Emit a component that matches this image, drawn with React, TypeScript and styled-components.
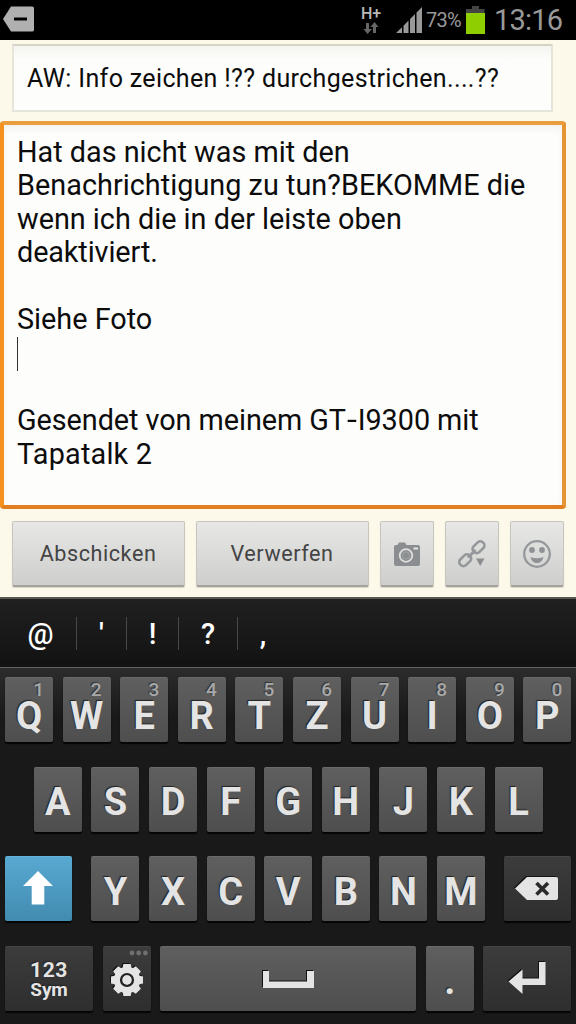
import React from "react";
import styled, { createGlobalStyle, css } from "styled-components";

const GlobalStyle = createGlobalStyle`
  * { box-sizing: border-box; }
  body { margin: 0; background: #000; font-family: Roboto, "Noto Sans", sans-serif; }
`;

const Screen = styled.div`
  width: 576px;
  height: 1024px;
  display: flex;
  flex-direction: column;
  overflow: hidden;
`;

const StatusBar = styled.header`
  height: 40px;
  display: flex;
  align-items: center;
  justify-content: space-between;
  padding: 0 13px 0 2px;
  background: #000;
  color: #999;
`;

const StatusGroup = styled.div`
  display: flex;
  align-items: center;
  height: 40px;
`;

const Percent = styled.span`
  width: 40px;
  margin-left: 3px;
  font-size: 20px;
  line-height: 41px;
  letter-spacing: -0.7px;
`;

const Clock = styled.span`
  width: 69px;
  margin-left: 9px;
  font-size: 29px;
  line-height: 39px;
  letter-spacing: -0.8px;
  color: #999;
`;

const Network = styled.div`
  display: flex;
  flex-direction: column;
  align-items: center;
  width: 22px;
  margin-right: 14px;
  font-size: 16px;
  font-weight: 500;
  line-height: 17px;
  color: #b8b8b8;
`;

const Composer = styled.main`
  height: 557px;
  background: #fdf9ea;
  padding: 4px 0 0;
  display: flex;
  flex-direction: column;
`;

const Subject = styled.div`
  width: 541px;
  height: 68px;
  margin-left: 12px;
  padding: 1px 0 0 13px;
  border: 2px solid #e6e5dc;
  border-top-color: #d5d3c4;
  background: linear-gradient(#f4f4f1, #fdfdfb 14px);
  font-size: 25px;
  line-height: 64px;
  letter-spacing: 0.35px;
  color: #0c0c0c;
  white-space: pre;
`;

const Message = styled.div`
  width: 566px;
  height: 388px;
  margin-top: 9px;
  padding: 10.5px 0 0 13px;
  border: 4px solid;
  border-color: #e99d3e #e69534 #e27f20 #f5921f;
  border-radius: 4px;
  background: #fdfdfb;
  box-shadow: inset 0 4px 6px #f3f3ef;
  color: #0c0c0c;
`;

const Line = styled.p<{ $spacing?: number }>`
  margin: 0;
  height: 33.6px;
  font-size: 28.8px;
  line-height: 33.6px;
  letter-spacing: ${(p) => p.$spacing ?? 0}px;
  white-space: pre;
`;

const Hyphen = styled.span`
  display: inline-block;
  margin: 0 1.9px;
  transform: scaleX(1.25);
`;

const Caret = styled.span`
  display: block;
  width: 1px;
  height: 34px;
  background: #333;
`;

const Actions = styled.div`
  display: flex;
  gap: 11px;
  margin: 12px 0 0 12px;
`;

const ActionButton = styled.button<{ $width: number }>`
  flex: none;
  width: ${(p) => p.$width}px;
  height: 66px;
  display: flex;
  align-items: center;
  justify-content: center;
  padding: 0 1px 0 0;
  border: 1px solid #c6c5be;
  border-bottom: 2px solid #a3a39b;
  border-radius: 2px;
  background: linear-gradient(#e7e7e6, #cececd);
  box-shadow: 0 1px 1px #d8d5c6;
  font-family: inherit;
  font-size: 21.6px;
  letter-spacing: 0.55px;
  color: #444;
`;

const Suggestions = styled.div`
  height: 70px;
  display: flex;
  align-items: center;
  border-top: 2px solid #555850;
  background: linear-gradient(#202020, #121212);
  color: #fff;
`;

const Suggestion = styled.span<{ $width: number; $shift?: number }>`
  width: ${(p) => p.$width}px;
  height: 33px;
  display: flex;
  align-items: center;
  justify-content: center;
  padding-top: 2px;
  padding-left: ${(p) => p.$shift ?? 0}px;
  border-right: 1px solid #484848;
  font-size: 29px;
  font-weight: 500;
  &:last-child { border-right: 0; }
`;

const Keyboard = styled.div`
  height: 357px;
  padding-top: 9px;
  border-top: 1px solid #626262;
  background: linear-gradient(#2c2c2c, #191919 50px);
`;

const KeyRow = styled.div<{ $inset: number }>`
  display: flex;
  gap: 9.6px;
  padding-left: ${(p) => p.$inset}px;
  height: 89.7px;
`;

const darkKey = css`
  background: linear-gradient(#3c3c3c, #2e2e2e);
  border-top-color: #454545;
`;
const blueKey = css`
  background: linear-gradient(#58a9d2, #428bb0);
  border-top-color: #66b2d8;
`;

const Key = styled.div<{ $width?: number; $tone?: "dark" | "blue"; $before?: number; $after?: number; $drop?: number }>`
  position: relative;
  flex: none;
  width: ${(p) => p.$width ?? 48}px;
  height: 65px;
  margin-left: ${(p) => p.$before ?? 0}px;
  margin-right: ${(p) => p.$after ?? 0}px;
  padding-top: ${(p) => p.$drop ?? 5}px;
  display: flex;
  flex-direction: column;
  align-items: center;
  justify-content: center;
  border-top: 1px solid #6a6a6a;
  border-radius: 2px;
  background: linear-gradient(#5f5f5f, #4e4e4e);
  box-shadow: 0 2px 1px #050505;
  color: #e4e4e4;
  font-size: 38px;
  font-weight: 700;
  line-height: 44px;
  text-shadow: -1px -1px 1px #222;
  ${(p) => p.$tone === "dark" && darkKey}
  ${(p) => p.$tone === "blue" && blueKey}
`;

const Letter = styled.span`
  display: block;
  height: 28px;
  line-height: 28px;
`;

const Hint = styled.span`
  position: absolute;
  top: 3px;
  right: 9px;
  height: 17px;
  font-size: 19px;
  font-weight: 500;
  line-height: 17px;
  color: #a8a8a8;
  text-shadow: -1px -1px 1px #333;
`;

const ModeLabel = styled.span<{ $size: number }>`
  font-size: ${(p) => p.$size}px;
  font-weight: 700;
  line-height: 20px;
  letter-spacing: ${(p) => (p.$size > 20 ? 0.6 : -0.1)}px;
`;

const Dots = styled.svg`
  position: absolute;
  top: 3px;
  right: 3px;
`;

const KeyIcon = styled.svg`
  display: block;
  filter: drop-shadow(-1px -1px 0 #111);
`;

const topRow = ["Q", "W", "E", "R", "T", "Z", "U", "I", "O", "P"];

export default function App() {
  return (
    <Screen>
      <GlobalStyle />
      <StatusBar>
        <svg width="34" height="30" viewBox="0 0 34 30">
          <path d="M1 14 L9 1.5 H30 Q32 1.5 32 3 V25 Q32 26.5 30 26.5 H9 Z" fill="#b0b0b0" />
          <path d="M12 14 H25" stroke="#000" strokeWidth="3" />
        </svg>
        <StatusGroup>
          <Network>
            H+
            <svg width="16" height="13" viewBox="0 0 16 13" fill="#666">
              <path d="M3 1 H6 V7 H9 L4.5 12 L0.500 7 H3 Z M10 11 H13 V5 H15.500 L11.500 0 L7.500 5 H10 Z" />
            </svg>
          </Network>
          <svg width="27" height="27" viewBox="0 0 27 27" fill="#999">
            <path d="M0 26 L6 20.200 V26 Z M7.500 26 V18.700 L12.500 13.500 V26 Z M14 26 V12 L19 7 V26 Z M20.500 26 V5.500 L26 0 V26 Z" />
          </svg>
          <Percent>73%</Percent>
          <svg width="19" height="28" viewBox="0 0 19 28">
            <path d="M6 0 H13 V3 H18.500 V7 H0 V3 H6 Z" fill="#444" />
            <path d="M0 7 H19 V28 H0 Z" fill="#8fce00" />
          </svg>
          <Clock>13:16</Clock>
        </StatusGroup>
      </StatusBar>

      <Composer>
        <Subject>AW: Info zeichen !?? durchgestrichen....??</Subject>
        <Message>
          <Line>Hat das nicht was mit den</Line>
          <Line $spacing={0.03}>Benachrichtigung zu tun?BEKOMME die</Line>
          <Line>wenn ich die in der leiste oben</Line>
          <Line $spacing={-0.1}>deaktiviert.</Line>
          <Line />
          <Line>Siehe Foto</Line>
          <Line><Caret /></Line>
          <Line />
          <Line $spacing={-0.05}>Gesendet von meinem GT<Hyphen>-</Hyphen>I9300 mit</Line>
          <Line $spacing={0.2}>Tapatalk 2</Line>
        </Message>
        <Actions>
          <ActionButton $width={173}>Abschicken</ActionButton>
          <ActionButton $width={173}>Verwerfen</ActionButton>
          <ActionButton $width={54}>
            <svg width="26" height="24" viewBox="0 0 26 24">
              <path d="M2 3 H3.500 L5 0.500 H11 L12.500 3 H24 Q26 3 26 5 V22 Q26 24 24 24 H2 Q0 24 0 22 V5 Q0 3 2 3 Z" fill="#8b8e90" />
              <circle cx="12" cy="13.500" r="6.300" fill="#8b8e90" stroke="#dededd" strokeWidth="1.800" />
              <circle cx="12" cy="13.500" r="3.600" fill="none" stroke="#a2a5a6" strokeWidth="1" />
              <path d="M19.500 5.500 H24 V7.500 H19.500 Z" fill="#e4e4e4" />
            </svg>
          </ActionButton>
          <ActionButton $width={54}>
            <svg width="28" height="28" viewBox="0 0 28 28">
              <g fill="none" stroke="#95989a" strokeWidth="2.600">
                <rect x="-6.500" y="-4" width="13" height="8" rx="3.600" transform="translate(20.500 7.200) rotate(-45)" />
                <rect x="-6.500" y="-4" width="13" height="8" rx="3.600" transform="translate(7.200 20.300) rotate(-45)" />
                <path d="M10 17.500 L17.500 10" strokeWidth="3" />
              </g>
              <path d="M18 18.500 H26.500 L22.250 26 Z" fill="#8b8e90" />
            </svg>
          </ActionButton>
          <ActionButton $width={54}>
            <svg width="28" height="28" viewBox="0 0 28 28">
              <circle cx="14" cy="14" r="12.800" fill="none" stroke="#95989a" strokeWidth="2.300" />
              <circle cx="9" cy="10" r="2.900" fill="#8f9294" />
              <circle cx="19" cy="10" r="2.900" fill="#8f9294" />
              <path d="M7.500 17 Q14 19.500 20.500 17 Q19 23 14 23 Q9 23 7.500 17 Z" fill="#8f9294" />
            </svg>
          </ActionButton>
        </Actions>
      </Composer>

      <Suggestions>
        <Suggestion $width={77} $shift={5}>@</Suggestion>
        <Suggestion $width={50}>'</Suggestion>
        <Suggestion $width={52}>!</Suggestion>
        <Suggestion $width={59}>?</Suggestion>
        <Suggestion $width={50}>,</Suggestion>
      </Suggestions>

      <Keyboard>
        <KeyRow $inset={5}>
          {topRow.map((k, i) => (
            <Key key={k} $drop={12}>
              <Hint>{(i + 1) % 10}</Hint>
              <Letter>{k}</Letter>
            </Key>
          ))}
        </KeyRow>
        <KeyRow $inset={33.8}>
          {[..."ASDFGHJKL"].map((k) => <Key key={k}>{k}</Key>)}
        </KeyRow>
        <KeyRow $inset={5}>
          <Key $width={67} $tone="blue" $after={9.8} $drop={0}>
            <svg width="32" height="36" viewBox="0 0 32 36">
              <path d="M15 0 L30 15 H21.300 V33.500 H8.700 V15 H0 Z" fill="#fff" />
            </svg>
          </Key>
          {[..."YXCVBNM"].map((k) => <Key key={k}>{k}</Key>)}
          <Key $width={67} $tone="dark" $before={9.400} $drop={0}>
            <KeyIcon width="45" height="25" viewBox="0 0 45 25">
              <path d="M0 11.500 L12 0 H41 Q43 0 43 2 V21 Q43 23 41 23 H12 Z" fill="#e4e4e4" />
              <path d="M21.500 6 L33 17.500 M33 6 L21.500 17.500" stroke="#2a2a2a" strokeWidth="3.600" />
            </KeyIcon>
          </Key>
        </KeyRow>
        <KeyRow $inset={5}>
          <Key $width={88} $tone="dark" $drop={1}>
            <ModeLabel $size={21}>123</ModeLabel>
            <ModeLabel $size={19}>Sym</ModeLabel>
          </Key>
          <Key $tone="dark" $drop={1}>
            <Dots width="19" height="6" viewBox="0 0 19 6" fill="#707070">
              <circle cx="3" cy="3" r="2.400" />
              <circle cx="9.700" cy="3" r="2.400" />
              <circle cx="16.400" cy="3" r="2.400" />
            </Dots>
            <KeyIcon width="34" height="34" viewBox="-17 -17 34 34">
              <circle r="9.200" fill="none" stroke="#e4e4e4" strokeWidth="8" />
              {[0, 45, 90, 135, 180, 225, 270, 315].map((a) => (
                <path key={a} d="M-4.600 -11 L-3.600 -16 H3.600 L4.600 -11 Z" fill="#e4e4e4" transform={`rotate(${a})`} />
              ))}
              <circle r="5" fill="#e4e4e4" />
              <circle r="6" fill="none" stroke="#222" strokeWidth="2.200" />
            </KeyIcon>
          </Key>
          <Key $width={256} $drop={1}>
            <KeyIcon width="51" height="17" viewBox="0 0 51 17">
              <path d="M0 0 H6 V10.500 H44 V0 H51 V17 H0 Z" fill="#e4e4e4" />
            </KeyIcon>
          </Key>
          <Key $drop={3}>.</Key>
          <Key $width={88} $tone="dark" $drop={0}>
            <KeyIcon width="39" height="35" viewBox="0 0 39 35">
              <path d="M31 0 H37.500 V23 H14.500 V32 L0.500 19.500 L14.500 7.500 V16.500 H31 Z" fill="#e4e4e4" />
            </KeyIcon>
          </Key>
        </KeyRow>
      </Keyboard>
    </Screen>
  );
}
